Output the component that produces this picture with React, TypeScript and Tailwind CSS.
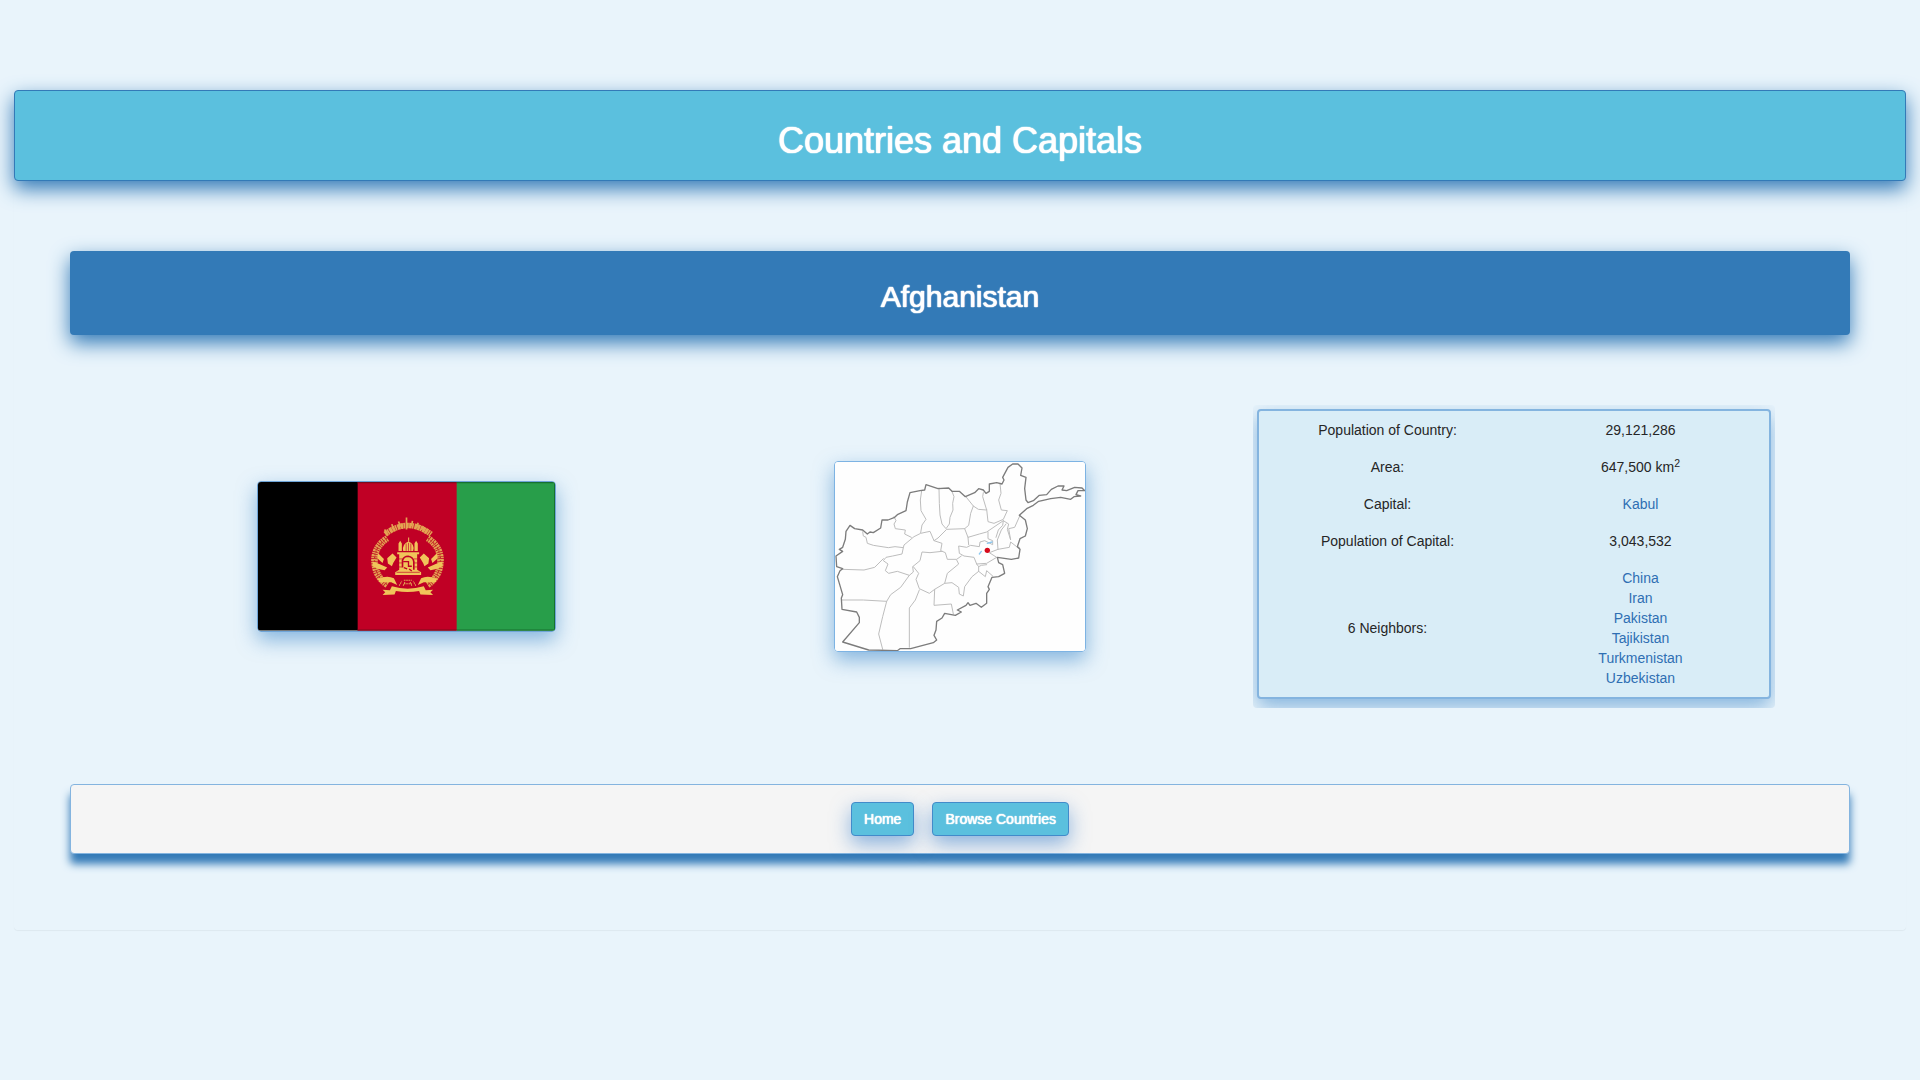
import React from "react";

const neighbors = ["China", "Iran", "Pakistan", "Tajikistan", "Turkmenistan", "Uzbekistan"];

const provinceBorders = [
  "M305 122 L301 150 L303 182 L318 208 L306 225 L302 248",
  "M357 114 L358 160 L360 195 L366 222 L378 236 L388 222 L390 202 L399 180 L398 160 L402 140 L395 122",
  "M222 200 L228 212 L222 222 L226 236 L256 240 L254 252 L274 262",
  "M128 245 L130 258 L138 262 L142 280 L160 286 L205 293 L225 290 L250 293 L252 285 L282 260 L302 250 L330 244 L342 272 L354 264 L380 238 L434 236 L446 226 L452 190 L460 168 L436 138",
  "M460 168 L475 178 L500 180 L488 140 L490 128",
  "M500 178 L504 215 L522 220 L550 208 L562 182 L544 180 L536 150 L543 130 L540 100",
  "M434 236 L444 262 L478 252 L500 246 L550 212 L548 226 L535 240 L528 262",
  "M504 246 L504 266 L518 272 L518 284 L494 272 L480 276 L478 290 L452 286 L440 292 L416 288 L418 310 L432 318 L462 322 L470 342 L476 350 L476 364 L496 380 L500 362 L518 378",
  "M444 262 L446 284",
  "M342 272 L366 280 L362 302 L376 308 L382 328 L410 328 L424 318",
  "M250 293 L246 312 L218 318 L198 322 L190 332 L204 342 L196 362 L206 370 L232 364 L268 376 L280 366 L278 350 L300 332 L306 306 L330 308 L366 304",
  "M68 358 L132 360 L164 352 L190 326",
  "M280 350 L296 370 L288 388 L298 416 L328 430 L344 418 L374 400 L382 370 L416 342 L410 330",
  "M374 400 L396 398 L416 412 L418 432 L430 438 L434 410 L456 380 L476 364",
  "M66 450 L130 450 L200 454 L212 434 L242 412 L268 376",
  "M200 454 L188 500 L176 552 L188 598",
  "M298 420 L286 450 L268 474 L268 592",
  "M344 418 L342 466 L394 462 L400 492",
  "M470 342 L500 340 L530 322 L508 308 L534 298 L568 292 L572 276 L590 290 L598 292",
  "M550 212 L566 222 L562 238 L572 270 L566 236 L584 232 L600 196",
  "M534 298 L532 270 L544 240 L558 222",
  "M476 350 L484 346 L500 344",
];

const countryBorder =
  "M68 576 L118 518 L118 502 L110 486 L66 478 L64 444 L68 434 L52 380 L60 362 L68 356 L50 350 L48 318 L68 304 L58 298 L68 292 L76 268 L78 244 L90 226 L104 236 L128 240 L142 252 L150 246 L160 248 L182 234 L186 210 L204 210 L224 202 L232 194 L258 182 L262 156 L270 128 L300 122 L314 120 L318 104 L354 116 L386 114 L396 124 L418 124 L436 140 L464 128 L476 116 L490 120 L498 130 L508 124 L508 102 L530 98 L546 102 L552 90 L548 82 L564 52 L578 42 L594 42 L606 54 L602 76 L618 82 L614 116 L618 150 L624 158 L640 152 L658 136 L680 134 L694 118 L714 108 L732 108 L726 120 L740 122 L764 112 L786 114 L794 122 L774 122 L768 134 L782 138 L762 140 L752 148 L722 142 L692 146 L656 154 L640 166 L620 176 L598 196 L616 210 L622 236 L616 258 L600 266 L592 290 L600 298 L596 324 L574 328 L532 322 L536 338 L548 344 L554 370 L536 380 L516 382 L504 410 L508 418 L500 430 L500 460 L484 472 L468 460 L450 466 L444 458 L438 466 L412 480 L424 486 L406 496 L374 490 L366 504 L350 514 L348 540 L342 556 L350 570 L340 578 L272 596 L240 596 L232 602 L146 600 Z";

function Flag() {
  return (
    <svg
      viewBox="51 66 894 444"
      preserveAspectRatio="none"
      role="img"
      aria-label="Flag of Afghanistan"
      className="block aspect-[2/1] w-full"
    >
      <rect x="51" y="66" width="301" height="444" fill="#000" />
      <rect x="351" y="66" width="299" height="444" fill="#c00025" />
      <rect x="649" y="66" width="296" height="444" fill="#289e4a" />
      <path d="M351 68H649M351 509H649" stroke="#7d0a1c" strokeWidth="4" />
      <path d="M649 68H945M649 509H945M944 68V509" stroke="#16702f" strokeWidth="4" />
      <g fill="none" stroke="#e3a552">
        <path d="M434 222 Q501 170 572 222" strokeWidth="17" strokeDasharray="8 1 5 2 9 1" />
        <path d="M432 208l8 12m14-28l4 14m16-22l6 16m18-28v36m18-26l-3 16m20-10l-4 14m20-4l-6 12m16-2l-6 12" strokeWidth="5" />
        <path d="M440 234 Q398 262 402 308 Q406 352 442 374" strokeWidth="20" strokeDasharray="4 2 6 2" />
        <path d="M562 234 Q604 262 600 308 Q596 352 560 374" strokeWidth="20" strokeDasharray="4 2 6 2" />
        <path
          d="M440 234 Q398 262 402 308 Q406 352 442 374M562 234 Q604 262 600 308 Q596 352 560 374"
          strokeWidth="4"
          stroke="#c23526"
          strokeDasharray="5 5"
        />
        <path d="M476 376l8-14m4 14l6-12m20 12l-6-12m18 12l-8-14M490 360h24M490 370h24" strokeWidth="3" strokeDasharray="5 2" />
      </g>
      <g fill="#f0c45a">
        <path d="M396 304Q420 312 440 322L432 330Q408 326 396 318ZM606 304Q582 312 562 322L570 330Q594 326 606 318Z" />
        <path d="M412 356Q440 344 460 354L470 374L452 366Q430 366 416 366ZM590 356Q562 344 542 354L532 374L550 366Q572 366 586 366Z" />
        <path d="M412 278L430 296L426 308L410 294ZM590 278L572 296L576 308L592 294Z" />
        <path d="M454 378Q501 392 550 378L556 390L578 388L570 396L578 404L540 402L536 392Q501 398 466 392L462 402L426 404L434 396L426 388L448 390Z" />
        <path d="M470 276H536V282H530V328L542 336V344H464V336L476 328V282H470Z" />
        <path d="M474 250L479 242L484 250V272H474ZM522 250L527 242L532 250V272H522Z" />
        <path d="M488 272Q484 252 504 244Q524 252 518 272ZM503 232h3v12h-3Z" />
        <path d="M440 294L456 280L468 292L458 308L454 318L442 310ZM566 294L550 280L538 292L548 308L552 318L564 310Z" />
      </g>
      <g fill="none" stroke="#c00025">
        <path d="M497 250V272M504 248V272M511 250V272" strokeWidth="2" />
        <path d="M486 322V300Q490 288 503 288Q518 290 520 304V328" strokeWidth="5" />
        <path d="M488 304h16v14h10m-24 4l10 4m6 0l8 6" strokeWidth="4" />
        <path d="M474 296h12M474 308h12M520 296h12M520 308h12M474 320h10M522 320h10M468 336h70" strokeWidth="2" />
      </g>
    </svg>
  );
}

function CapitalMap() {
  return (
    <svg
      viewBox="45 36 750 567"
      role="img"
      aria-label="Map of Afghanistan with Kabul marked"
      className="block aspect-[250/189] w-full bg-[#fefefe]"
    >
      <g fill="none" strokeLinejoin="round" strokeLinecap="round">
        <g stroke="#bdbdbd" strokeWidth="3">
          {provinceBorders.map((d) => (
            <path key={d} d={d} />
          ))}
        </g>
        <path d={countryBorder} stroke="#7c7c7c" strokeWidth="4" />
        <path d="M502 280l14-4M478 312l6-8" stroke="#8cc8f0" strokeWidth="4" />
      </g>
      <circle cx="502" cy="301" r="8" fill="#d60a1c" />
    </svg>
  );
}

function Row({ label, children }: { label: string; children: React.ReactNode }) {
  return (
    <tr className="border-t border-[#d9edf7]">
      <th scope="row" className="w-1/2 p-2 align-middle font-normal">
        {label}
      </th>
      <td className="w-1/2 p-2 align-middle">{children}</td>
    </tr>
  );
}

function TextLink({ children }: { children: string }) {
  return (
    <a href="#" className="text-[#2f6fb3] hover:underline">
      {children}
    </a>
  );
}

function NavButton({ children }: { children: string }) {
  return (
    <button
      type="button"
      className="h-[34px] rounded border border-[#428bca] bg-[#5bc0de] px-3 leading-5 text-white shadow-[0_8px_20px_rgba(51,122,200,0.55)] [text-shadow:0_0_1px_#fff,0_0_1px_#fff]"
    >
      {children}
    </button>
  );
}

export default function App() {
  return (
    <div className="min-h-screen bg-[#e9f4fb] px-3.5 pt-[90px] pb-5 font-['Liberation_Sans',Arial,sans-serif] text-sm leading-5 text-[#262626]">
      <div className="rounded-[4px] shadow-[0_1px_1px_rgba(0,0,0,0.05)]">
        <header className="rounded-[4px] border border-[#337ab7] bg-[#5bc0de] px-4 pt-[30px] pb-5 text-center text-white shadow-[0_8px_20px_#337ab7]">
          <h1 className="text-[36px] leading-[39px] [text-shadow:0_0_1px_#fff,0_0_1px_#fff,0_0_1px_#fff]">
            Countries and Capitals
          </h1>
        </header>
        <main className="px-14 pt-[70px] pb-[76px]">
          <section className="rounded-[4px] bg-[#337ab7] px-4 pt-[29px] pb-[22px] text-center text-white shadow-[0_8px_20px_#337ab7]">
            <h2 className="text-[30px] leading-[33px] [text-shadow:0_0_1px_#fff,0_0_1px_#fff,0_0_1px_#fff]">
              Afghanistan
            </h2>
          </section>
          <section className="grid grid-cols-3 items-center px-[59px] pt-[70px] pb-[76px]">
            <div className="flex justify-center px-4">
              <div className="w-[299px] overflow-hidden rounded-[4px] border border-[#6fa5d8] shadow-[0_8px_20px_rgba(66,139,202,0.6)]">
                <Flag />
              </div>
            </div>
            <div className="flex justify-center px-4">
              <div className="w-[252px] overflow-hidden rounded-[4px] border border-[#7db3e3] shadow-[0_8px_20px_rgba(66,139,202,0.6)]">
                <CapitalMap />
              </div>
            </div>
            <div className="px-4">
              <div className="overflow-hidden rounded-[4px] px-1 pt-1 pb-[9px]">
                <div className="rounded-[4px] border-2 border-[#84b4df] bg-[#d9edf7] px-0.5 pb-px shadow-[0_8px_20px_rgba(66,139,202,0.6)]">
                  <table className="w-full table-fixed text-center">
                    <tbody>
                      <Row label="Population of Country:">29,121,286</Row>
                      <Row label="Area:">
                        647,500 km<sup>2</sup>
                      </Row>
                      <Row label="Capital:">
                        <TextLink>Kabul</TextLink>
                      </Row>
                      <Row label="Population of Capital:">3,043,532</Row>
                      <Row label="6 Neighbors:">
                        <ul>
                          {neighbors.map((name) => (
                            <li key={name}>
                              <TextLink>{name}</TextLink>
                            </li>
                          ))}
                        </ul>
                      </Row>
                    </tbody>
                  </table>
                </div>
              </div>
            </div>
          </section>
          <nav className="flex justify-center gap-[18px] rounded-[4px] border border-[#84b4df] bg-[#f5f5f5] py-[17px] shadow-[0_10px_8px_#337ab7]">
            <NavButton>Home</NavButton>
            <NavButton>Browse Countries</NavButton>
          </nav>
        </main>
      </div>
    </div>
  );
}
